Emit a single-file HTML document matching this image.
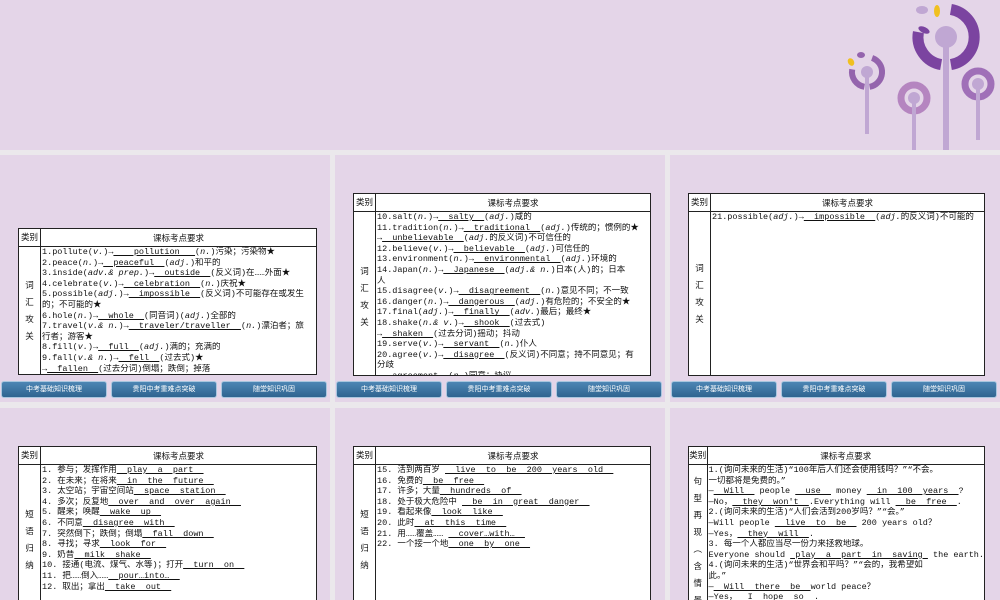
<!DOCTYPE html>
<html><head><meta charset="utf-8"><style>
*{margin:0;padding:0;box-sizing:border-box}
body{width:1000px;height:600px;background:#ebe8ec;position:relative;overflow:hidden;font-family:"Liberation Mono","Noto Sans CJK SC",monospace;}
.top{position:absolute;left:0;top:0;width:1000px;height:150px;background:#e4d5e8}
.p{position:absolute;width:330px;background:#e4d5e8;overflow:hidden}
.clip{position:absolute;overflow:hidden}
.bb{border-bottom:1px solid #222}
table{border-collapse:collapse;background:#fff;font-size:8.5px;color:#111;width:100%}
td{border:1px solid #222;vertical-align:middle}
.h td{height:16px;text-align:center;font-family:"Noto Sans CJK SC",sans-serif;font-size:8.5px}
.k{width:22px;text-align:center;font-family:"Noto Sans CJK SC",sans-serif;font-size:8.5px;line-height:17px}
.c div{line-height:10.6px;white-space:nowrap;padding-left:1px;overflow:hidden}
u{text-decoration:underline;white-space:pre}
.b{position:absolute;top:226px;height:17px;width:106px;background:linear-gradient(#4d86b4,#2f6490);border:1px solid #a9c6de;border-radius:3px;color:#fff;font-size:7px;text-align:center;line-height:15px;font-family:"Noto Sans CJK SC",sans-serif}
</style></head><body>
<div class="top">
<svg width="1000" height="150" style="position:absolute;left:0;top:0">
<g fill="none">
<path d="M950.9 9.4 A28 28 0 0 1 950.9 64.6" stroke="#7b44a0" stroke-width="11"/>
<path d="M941.1 64.6 A28 28 0 0 1 918.4 32.1" stroke="#7b44a0" stroke-width="11"/>
<path d="M872.1 57.9 A15 15 0 0 1 869.6 86.8" stroke="#9464ad" stroke-width="6"/>
<path d="M864.4 86.8 A15 15 0 0 1 852.2 69.4" stroke="#9464ad" stroke-width="6"/>
<circle cx="914" cy="98" r="13" stroke="#b585c0" stroke-width="7"/>
<circle cx="978" cy="84" r="13" stroke="#a070b8" stroke-width="7"/>
</g>
<g fill="#c0a7d3">
<circle cx="946" cy="37" r="11"/><rect x="943" y="37" width="6" height="113"/>
<circle cx="867" cy="72" r="6"/><rect x="865" y="72" width="4" height="62"/>
<circle cx="914" cy="98" r="6"/><rect x="912" y="98" width="4" height="52"/>
<circle cx="978" cy="84" r="6"/><rect x="976" y="84" width="4" height="56"/>
</g>
<ellipse cx="922" cy="10" rx="6" ry="4" fill="#c0a7d3"/>
<ellipse cx="924" cy="30" rx="6" ry="3" fill="#7b44a0" transform="rotate(25 924 30)"/>
<ellipse cx="937" cy="11" rx="3" ry="6" fill="#f0c020"/>
<ellipse cx="851" cy="62" rx="3" ry="4" fill="#f0c020" transform="rotate(-30 851 62)"/>
<ellipse cx="861" cy="55" rx="4" ry="3" fill="#9464ad"/>
</svg>
</div>

<!-- row1 -->
<div class="p" style="left:0;top:155px;height:247px">
<div class="clip bb" style="left:18px;top:73px;width:299px;height:147px"><table>
<tr class="h"><td class="k">类别</td><td>课标考点要求</td></tr>
<tr><td class="k">词<br>汇<br>攻<br>关</td><td class="c">
<div>1.pollute(<i>v.</i>)→<u>    pollution   </u>(<i>n.</i>)污染；污染物★</div>
<div>2.peace(<i>n.</i>)→<u>  peaceful  </u>(<i>adj.</i>)和平的</div>
<div>3.inside(<i>adv.&amp; prep.</i>)→<u>  outside  </u>(反义词)在……外面★</div>
<div>4.celebrate(<i>v.</i>)→<u>  celebration  </u>(<i>n.</i>)庆祝★</div>
<div>5.possible(<i>adj.</i>)→<u>  impossible  </u>(反义词)不可能存在或发生</div>
<div>的；不可能的★</div>
<div>6.hole(<i>n.</i>)→<u>  whole  </u>(同音词)(<i>adj.</i>)全部的</div>
<div>7.travel(<i>v.&amp; n.</i>)→<u>  traveler/traveller  </u>(<i>n.</i>)漂泊者；旅</div>
<div>行者；游客★</div>
<div>8.fill(<i>v.</i>)→<u>  full  </u>(<i>adj.</i>)满的；充满的</div>
<div>9.fall(<i>v.&amp; n.</i>)→<u>  fell  </u>(过去式)★</div>
<div>→<u>  fallen  </u>(过去分词)倒塌；跌倒；掉落</div>
</td></tr></table></div>
<div class="b" style="left:1px">中考基础知识梳理</div><div class="b" style="left:111px">贵阳中考重难点突破</div><div class="b" style="left:221px">随堂知识巩固</div>
</div>

<div class="p" style="left:335px;top:155px;height:247px">
<div class="clip bb" style="left:18px;top:38px;width:298px;height:183px"><table>
<tr class="h"><td class="k">类别</td><td>课标考点要求</td></tr>
<tr><td class="k">词<br>汇<br>攻<br>关</td><td class="c">
<div>10.salt(<i>n.</i>)→<u>  salty  </u>(<i>adj.</i>)咸的</div>
<div>11.tradition(<i>n.</i>)→<u>  traditional  </u>(<i>adj.</i>)传统的；惯例的★</div>
<div>→<u>  unbelievable  </u>(<i>adj.</i>的反义词)不可信任的</div>
<div>12.believe(<i>v.</i>)→<u>  believable  </u>(<i>adj.</i>)可信任的</div>
<div>13.environment(<i>n.</i>)→<u>  environmental  </u>(<i>adj.</i>)环境的</div>
<div>14.Japan(<i>n.</i>)→<u>  Japanese  </u>(<i>adj.&amp; n.</i>)日本(人)的；日本</div>
<div>人</div>
<div>15.disagree(<i>v.</i>)→<u>  disagreement  </u>(<i>n.</i>)意见不同；不一致</div>
<div>16.danger(<i>n.</i>)→<u>  dangerous  </u>(<i>adj.</i>)有危险的；不安全的★</div>
<div>17.final(<i>adj.</i>)→<u>  finally  </u>(<i>adv.</i>)最后；最终★</div>
<div>18.shake(<i>n.&amp; v.</i>)→<u>  shook  </u>(过去式)</div>
<div>→<u>  shaken  </u>(过去分词)摇动；抖动</div>
<div>19.serve(<i>v.</i>)→<u>  servant  </u>(<i>n.</i>)仆人</div>
<div>20.agree(<i>v.</i>)→<u>  disagree  </u>(反义词)不同意；持不同意见；有</div>
<div>分歧</div>
<div>→<u>  agreement  </u>(<i>n.</i>)同意；协议</div>
</td></tr></table></div>
<div class="b" style="left:1px">中考基础知识梳理</div><div class="b" style="left:111px">贵阳中考重难点突破</div><div class="b" style="left:221px">随堂知识巩固</div>
</div>

<div class="p" style="left:670px;top:155px;height:247px">
<div class="clip" style="left:18px;top:38px;width:297px;height:183px"><table style="height:183px">
<tr class="h"><td class="k">类别</td><td>课标考点要求</td></tr>
<tr><td class="k">词<br>汇<br>攻<br>关</td><td class="c" style="vertical-align:top">
<div>21.possible(<i>adj.</i>)→<u>  impossible  </u>(<i>adj.</i>的反义词)不可能的</div>
</td></tr></table></div>
<div class="b" style="left:1px">中考基础知识梳理</div><div class="b" style="left:111px">贵阳中考重难点突破</div><div class="b" style="left:221px">随堂知识巩固</div>
</div>

<!-- row2 -->
<div class="p" style="left:0;top:408px;height:192px">
<div class="clip" style="left:18px;top:38px;width:299px;height:160px"><table style="height:170px">
<tr class="h"><td class="k">类别</td><td>课标考点要求</td></tr>
<tr><td class="k">短<br>语<br>归<br>纳</td><td class="c" style="vertical-align:top">
<div>1. 参与；发挥作用<u>  play  a  part  </u></div>
<div>2. 在未来；在将来<u>  in  the  future  </u></div>
<div>3. 太空站；宇宙空间站<u>  space  station  </u></div>
<div>4. 多次；反复地<u>  over  and  over  again  </u></div>
<div>5. 醒来；唤醒<u>  wake  up  </u></div>
<div>6. 不同意<u>  disagree  with  </u></div>
<div>7. 突然倒下；跌倒；倒塌<u>  fall  down  </u></div>
<div>8. 寻找；寻求<u>  look  for  </u></div>
<div>9. 奶昔<u>  milk  shake  </u></div>
<div>10. 接通(电流、煤气、水等)；打开<u>  turn  on  </u></div>
<div>11. 把……倒入……<u>  pour…into…  </u></div>
<div>12. 取出；拿出<u>  take  out  </u></div>
</td></tr></table></div>
</div>

<div class="p" style="left:335px;top:408px;height:192px">
<div class="clip" style="left:18px;top:38px;width:298px;height:160px"><table style="height:170px">
<tr class="h"><td class="k">类别</td><td>课标考点要求</td></tr>
<tr><td class="k">短<br>语<br>归<br>纳</td><td class="c" style="vertical-align:top">
<div>15. 活到两百岁 <u>  live  to  be  200  years  old  </u></div>
<div>16. 免费的<u>  be  free  </u></div>
<div>17. 许多；大量<u>  hundreds  of  </u></div>
<div>18. 处于极大危险中     <u>  be  in  great  danger  </u></div>
<div>19. 看起来像<u>  look  like  </u></div>
<div>20. 此时<u>  at  this  time  </u></div>
<div>21. 用……覆盖……  <u>  cover…with…  </u></div>
<div>22. 一个接一个地<u>  one  by  one  </u></div>
</td></tr></table></div>
</div>

<div class="p" style="left:670px;top:408px;height:192px">
<div class="clip" style="left:18px;top:38px;width:297px;height:160px"><table style="height:170px">
<tr class="h"><td class="k">类别</td><td>课标考点要求</td></tr>
<tr><td class="k" style="vertical-align:top;padding-top:8px">句<br>型<br>再<br>现<br>︵<br>含<br>情<br>景<br>交<br>际</td><td class="c" style="vertical-align:top">
<div>1.(询问未来的生活)“100年后人们还会使用钱吗？”“不会。</div>
<div>一切都将是免费的。”</div>
<div>—<u>  Will  </u> people <u>  use  </u> money <u>  in  100  years  </u>?</div>
<div>—No，<u>  they  won't  </u>.Everything will <u>  be  free  </u>.</div>
<div>2.(询问未来的生活)“人们会活到200岁吗？”“会。”</div>
<div>—Will people <u>  live  to  be  </u> 200 years old？</div>
<div>—Yes，<u>  they  will  </u>.</div>
<div>3. 每一个人都应当尽一份力来拯救地球。</div>
<div>Everyone should <u> play  a  part  in  saving </u> the earth.</div>
<div>4.(询问未来的生活)“世界会和平吗？”“会的，我希望如</div>
<div>此。”</div>
<div>—<u>  Will  there  be  </u>world peace？</div>
<div>—Yes，<u>  I  hope  so  </u>.</div>
</td></tr></table></div>
</div>
</body></html>
